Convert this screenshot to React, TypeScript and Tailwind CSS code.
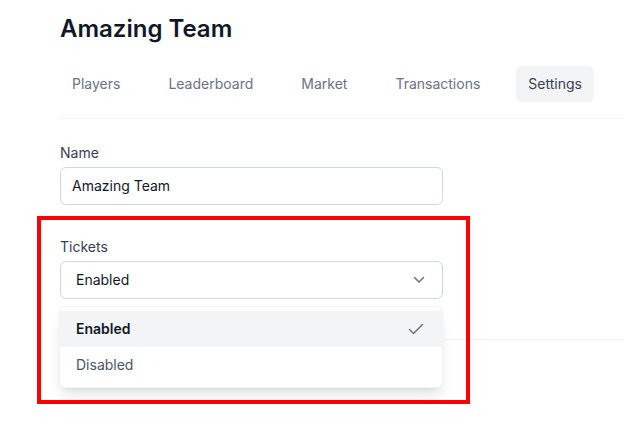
import { useState } from 'react'

const TABS = ['Players', 'Leaderboard', 'Market', 'Transactions', 'Settings']

const OPTIONS = ['Enabled', 'Disabled']

export default function App() {
  const [tab] = useState('Settings')
  const [tickets] = useState('Enabled')

  return (
    <div className="relative min-h-screen bg-white font-['Inter',sans-serif] text-gray-900">
      <div className="pl-[60px] pt-[13px]">
        <h1 className="text-2xl font-semibold text-gray-900">Amazing Team</h1>

        <nav className="mt-[21px] flex gap-6 border-b border-gray-100 pb-4">
          {TABS.map((t) => (
            <a
              key={t}
              href="#"
              className={`rounded-md px-3 py-2 text-sm ${
                t === tab ? 'bg-gray-100 text-gray-700' : 'text-gray-500'
              }`}
            >
              {t}
            </a>
          ))}
        </nav>

        <div className="mt-6 w-[383px]">
          <label className="block text-sm text-gray-700">Name</label>
          <input
            className="mt-1 block w-full rounded-md border border-gray-300 px-[11px] py-2 text-sm text-gray-900 outline-none"
            defaultValue="Amazing Team"
          />

          <label className="mt-8 block text-sm text-gray-700">Tickets</label>
          <div className="relative mt-1">
            <button className="flex w-full items-center justify-between rounded-md border border-gray-300 py-2 pl-[15px] pr-[17px] text-sm text-gray-900">
              {tickets}
              <svg width="12" height="8" viewBox="0 0 12 8" fill="none" className="text-gray-500">
                <path d="M1.5 1.5 6 6l4.5-4.5" stroke="currentColor" strokeWidth="1.5" strokeLinecap="round" strokeLinejoin="round" />
              </svg>
            </button>

            <ul className="absolute left-[-1px] right-0 top-full z-10 mt-[7px] rounded-md border border-gray-100 bg-white py-1 shadow-lg">
              {OPTIONS.map((o) => {
                const selected = o === tickets
                return (
                  <li
                    key={o}
                    className={`flex items-center justify-between px-4 py-2 text-sm ${
                      selected ? 'bg-gray-100 font-semibold text-gray-900' : 'text-gray-600'
                    }`}
                  >
                    {o}
                    {selected && (
                      <svg width="16" height="12" viewBox="0 0 16 12" fill="none" className="mr-[2px] text-gray-500">
                        <path d="M1.5 6.5 5.5 10.5 14.5 1.5" stroke="currentColor" strokeWidth="1.5" strokeLinecap="round" strokeLinejoin="round" />
                      </svg>
                    )}
                  </li>
                )
              })}
            </ul>
          </div>
        </div>

        <div className="mt-10 border-t border-gray-100" />
      </div>

      {/* highlight box */}
      <div className="pointer-events-none absolute left-[37px] top-[216px] h-[188px] w-[433px] border-4 border-[#ff0000]" />
    </div>
  )
}
